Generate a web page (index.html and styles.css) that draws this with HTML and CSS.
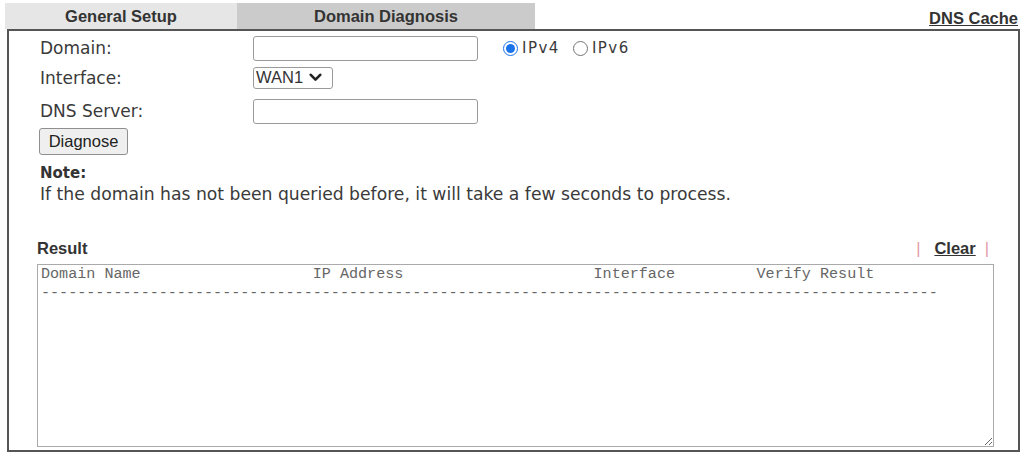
FILE: index.html
```html
<!DOCTYPE html>
<html lang="en">
<head>
<meta charset="utf-8">
<title>Domain Diagnosis</title>
<link rel="stylesheet" href="styles.css">
</head>
<body>
<div class="top">
  <div class="tabs">
    <div class="tab tab-general">General Setup</div>
    <div class="tab tab-active">Domain Diagnosis</div>
  </div>
  <a class="dns-cache" href="#">DNS Cache</a>
</div>
<div class="panel">
  <div class="row row1">
    <span class="lbl">Domain:</span>
    <input class="txt" type="text">
    <span class="radios">
      <label class="rad"><input type="radio" name="ipv" checked><span>IPv4</span></label>
      <label class="rad"><input type="radio" name="ipv"><span>IPv6</span></label>
    </span>
  </div>
  <div class="row row2">
    <span class="lbl">Interface:</span>
    <span class="sel"><span class="sel-text">WAN1</span><svg class="chev" width="13" height="9" viewBox="0 0 13 9"><path d="M1.8 1.8 L6.5 6.6 L11.2 1.8" fill="none" stroke="#222" stroke-width="2.6" stroke-linecap="round" stroke-linejoin="round"/></svg></span>
  </div>
  <div class="row row3">
    <span class="lbl">DNS Server:</span>
    <input class="txt" type="text">
  </div>
  <div class="btn-row">
    <button class="btn" type="button">Diagnose</button>
  </div>
  <div class="note-title">Note:</div>
  <div class="note-text">If the domain has not been queried before, it will take a few seconds to process.</div>
  <div class="result-head">
    <span class="result-title">Result</span>
    <span class="result-links"><span class="bar">|</span><a class="clear" href="#">Clear</a><span class="bar">|</span></span>
  </div>
  <textarea class="result-box" wrap="off" readonly>Domain Name                   IP Address                     Interface         Verify Result
---------------------------------------------------------------------------------------------------</textarea>
</div>
</body>
</html>
```

FILE: styles.css
```css
html, body {
  margin: 0;
  padding: 0;
  background: #fff;
}

body {
  font-family: "DejaVu Sans", Verdana, sans-serif;
  color: #333;
  width: 1026px;
  height: 453px;
  overflow: hidden;
}

.top {
  display: flex;
  justify-content: space-between;
  align-items: stretch;
  padding-top: 3px;
  margin-left: 5px;
  margin-right: 8px;
  height: 26px;
}

.tabs {
  display: flex;
}

.tab {
  font-family: "Liberation Sans", Arial, sans-serif;
  font-weight: bold;
  font-size: 16.5px;
  line-height: 26px;
  text-align: center;
  color: #333;
}

.tab-general {
  width: 232px;
  background: #e6e6e6;
}

.tab-active {
  width: 298px;
  background: #cbcbcb;
}

.dns-cache {
  font-family: "Liberation Sans", Arial, sans-serif;
  font-weight: bold;
  font-size: 16.5px;
  line-height: 26px;
  padding-top: 2px;
  color: #333;
  text-decoration: underline;
}

.panel {
  margin-left: 7px;
  margin-right: 6px;
  border: 2px solid #555;
  padding: 2px 24px 3px 28px;
}

.row {
  display: flex;
  align-items: center;
}

.row1 { height: 30px; }
.row2 { height: 29px; }
.row3 { height: 34px; margin-top: 2px; }

.lbl {
  width: 213px;
  padding-left: 3px;
  font-size: 17px;
  color: #3a3a3a;
}

.txt {
  box-sizing: border-box;
  width: 225px;
  height: 25px;
  margin: 0;
  border: 1px solid #9a9a9a;
  border-radius: 3px;
  background: #fff;
  padding: 0 4px;
}

.radios {
  display: flex;
  align-items: center;
  margin-left: 25px;
  gap: 13px;
}

.rad {
  display: flex;
  align-items: center;
  font-size: 15px;
  letter-spacing: 1.5px;
  color: #3a3a3a;
}

.rad input {
  width: 15px;
  height: 15px;
  margin: 0 4px 0 0;
  accent-color: #1a73e8;
}

.sel {
  box-sizing: border-box;
  display: flex;
  align-items: center;
  width: 80px;
  height: 22px;
  border: 1px solid #9a9a9a;
  border-radius: 3px;
  padding-left: 2px;
  font-family: "Liberation Sans", Arial, sans-serif;
  font-size: 16.5px;
  color: #333;
}

.chev {
  margin-left: 6px;
}

.btn-row {
  height: 27px;
  padding-left: 2px;
}

.btn {
  box-sizing: border-box;
  width: 89px;
  height: 27px;
  margin: 0;
  padding: 0;
  font-family: "Liberation Sans", Arial, sans-serif;
  font-size: 16.5px;
  color: #222;
  background: #efefef;
  border: 1px solid #8f8f8f;
  border-radius: 3px;
}

.note-title {
  margin-top: 9px;
  padding-left: 3px;
  font-weight: bold;
  font-size: 15px;
  line-height: 18px;
  color: #333;
}

.note-text {
  margin-top: 2px;
  padding-left: 3px;
  font-size: 17.2px;
  line-height: 20px;
  color: #3a3a3a;
}

.result-head {
  display: flex;
  justify-content: space-between;
  align-items: baseline;
  margin-top: 34px;
  height: 20px;
  font-family: "Liberation Sans", Arial, sans-serif;
  font-size: 16.5px;
  line-height: 20px;
}

.result-title {
  font-weight: bold;
  color: #333;
}

.result-links {
  display: flex;
  align-items: baseline;
  margin-right: 5px;
}

.bar {
  color: #e39aa9;
  font-weight: normal;
}

.clear {
  font-weight: bold;
  color: #333;
  text-decoration: underline;
  margin: 0 9px 0 14px;
}

.result-box {
  display: block;
  box-sizing: border-box;
  width: 100%;
  height: 183px;
  margin: 6px 0 0 0;
  padding: 0 3px;
  border: 1px solid #aaa;
  font-family: "Liberation Mono", "Courier New", monospace;
  font-size: 15.1px;
  line-height: 19px;
  color: #666;
  background: #fff;
  white-space: pre;
  overflow: hidden;
}
```
